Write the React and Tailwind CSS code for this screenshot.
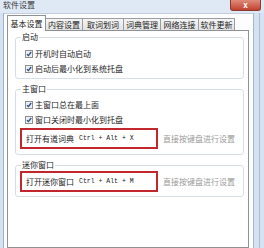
import React from "react";

const CJK = { fontFamily: '"Noto Sans CJK SC", "Noto Sans", sans-serif' };

function Check() {
  return (
    <svg width="8" height="8" viewBox="0 0 8 8" className="shrink-0">
      <rect x="0.5" y="0.5" width="7" height="7" fill="#f4f4f4" stroke="#8e8f8f" />
      <rect x="1.5" y="1.5" width="5" height="5" fill="#e6e9ee" />
      <path d="M2 4.2 L3.4 5.6 L6.2 2" fill="none" stroke="#2b4f8c" strokeWidth="1.3" />
    </svg>
  );
}

function CheckRow({ children }) {
  return (
    <div className="flex h-[15px] items-center gap-[2px] pl-[5px]">
      <Check />
      <span className="text-[8px] leading-[10px] text-[#1e1e1e]">{children}</span>
    </div>
  );
}

function HotkeyRow({ label, keys }) {
  return (
    <div className="flex items-center">
      <div className="flex h-[21px] w-[138px] items-center border-2 border-[#c1272d] pl-[4px]">
        <span className="w-[53px] text-[8px] leading-[10px] text-[#1e1e1e]">{label}</span>
        <span
          className="text-[6.5px] leading-[10px] text-[#222]"
          style={{ fontFamily: '"Liberation Mono", monospace' }}
        >
          {keys}
        </span>
      </div>
      <span className="ml-[5px] text-[8px] leading-[10px] text-[#9a9a9a]">直接按键盘进行设置</span>
    </div>
  );
}

function Group({ title, className, children }) {
  return (
    <fieldset className={"rounded-[3px] border border-[#d5dfe5] px-[4px] " + className}>
      <legend className="ml-[1px] px-[1px] text-[8px] leading-[10px] text-[#1e1e1e]">{title}</legend>
      {children}
    </fieldset>
  );
}

export default function App() {
  const tabs = [
    ["内容设置", "w-[37px]"],
    ["取词划词", "w-[41px]"],
    ["词典管理", "w-[37px]"],
    ["网络连接", "w-[38px]"],
    ["软件更新", "w-[36px]"],
  ];
  return (
    <div className="flex h-[248px] w-[264px] flex-col overflow-hidden bg-[#d4e2f1]" style={CJK}>
      {/* title bar */}
      <div className="flex h-[13px] shrink-0 items-start justify-between bg-[#dfe9f5]">
        <span className="ml-[3px] text-[8px] leading-[9px] text-[#3a3a3a]">软件设置</span>
        <div className="mr-[3px] flex h-[11px] w-[31px] items-center justify-center rounded-b-[3px] border border-t-0 border-[#8a3a33] bg-gradient-to-b from-[#e08a7a] to-[#c2402e]">
          <span className="text-[8px] font-bold leading-[8px] text-white">x</span>
        </div>
      </div>
      {/* body */}
      <div className="flex min-h-0 flex-1">
        <div className="w-[4px] shrink-0 border-r border-[#9fb5cf] bg-[#d4e2f1]" />
        <div className="flex min-w-0 flex-1 flex-col border-t border-[#c3cfdc] bg-[#fdfdfd] pl-[3px] pr-[4px]">
          {/* tabs */}
          <div className="mt-[1px] flex h-[15px] shrink-0 items-end">
            <div className="relative z-10 -mb-px flex h-[16px] w-[39px] items-center justify-center border border-b-0 border-[#8e9196] bg-white text-[8px] leading-[10px] text-[#1e1e1e]">
              基本设置
            </div>
            {tabs.map(([t, w]) => (
              <div
                key={t}
                className={
                  "flex h-[12px] items-center justify-center border border-b-0 border-l-0 border-[#9a9da2] bg-gradient-to-b from-[#f5f5f5] to-[#e3e3e3] text-[8px] leading-[10px] text-[#1e1e1e] " +
                  w
                }
              >
                {t}
              </div>
            ))}
          </div>
          {/* panel */}
          <div className="flex-1 border border-[#8e9196] bg-white pl-[7px] pr-[4px] pt-[1px]">
            <Group title="启动" className="pb-[2px] pt-[4px]">
              <CheckRow>开机时自动启动</CheckRow>
              <CheckRow>启动后最小化到系统托盘</CheckRow>
            </Group>
            <Group title="主窗口" className="mt-[5px] pb-[5px] pt-[3px]">
              <CheckRow>主窗口总在最上面</CheckRow>
              <CheckRow>窗口关闭时最小化到托盘</CheckRow>
              <div className="mt-[1px]">
                <HotkeyRow label="打开有道词典" keys="Ctrl + Alt + X" />
              </div>
            </Group>
            <Group title="迷你窗口" className="mt-[5px] pb-[4px] pt-[1px]">
              <HotkeyRow label="打开迷你窗口" keys="Ctrl + Alt + M" />
            </Group>
          </div>
        </div>
        <div className="flex w-[11px] shrink-0 border-l border-[#a3b8d0] bg-[#d4e2f1]">
          <div className="ml-[5px] w-[1px] bg-[#aebfd4]" />
        </div>
      </div>
    </div>
  );
}
